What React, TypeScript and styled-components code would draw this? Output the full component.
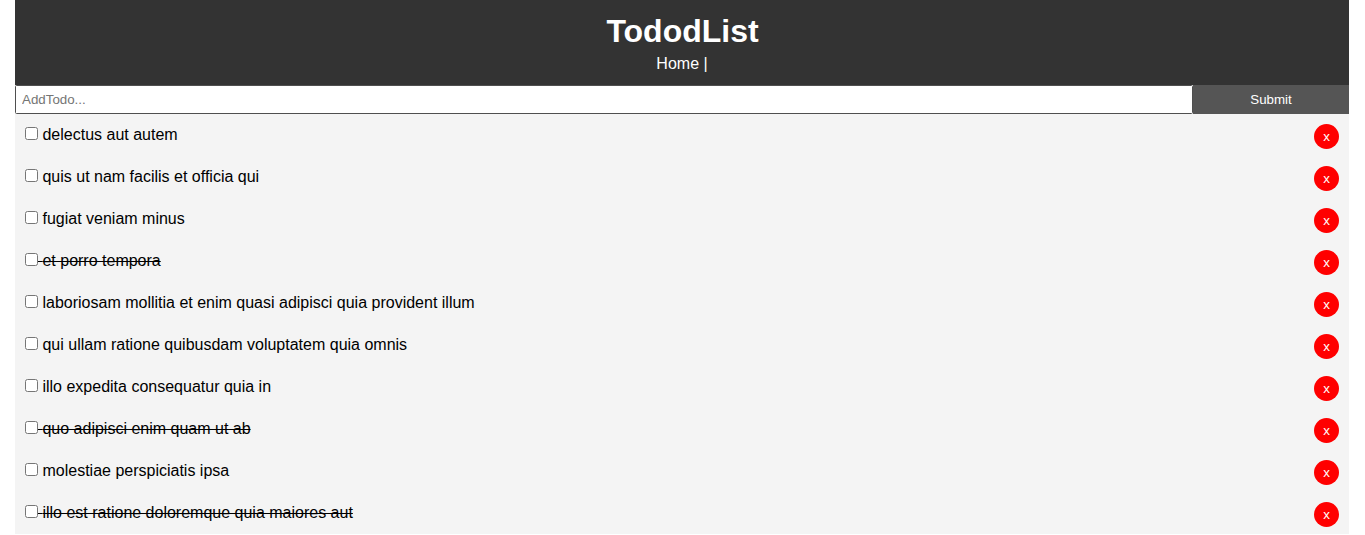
import React, { useState } from "react";
import styled, { createGlobalStyle } from "styled-components";

const GlobalStyle = createGlobalStyle`
  * { box-sizing: border-box; margin: 0; padding: 0; }
  body { font-family: "Liberation Sans", Arial, Helvetica, sans-serif; line-height: 1.4; background: #fff; }
`;
const Container = styled.div`
  padding: 0 16px 0 15px;
`;
const Header = styled.header`
  background: #333;
  color: #fff;
  text-align: center;
  padding: 9px 10px;
  height: 85px;
`;
const Title = styled.h1`
  font-size: 32px;
  line-height: 44px;
  padding-left: 1px;
`;
const NavLink = styled.a`
  color: #fff;
  text-decoration: none;
`;
const Form = styled.form`
  display: flex;
  background: #fff;
`;
const TextField = styled.input`
  flex: 1;
  padding: 5px 6px;
  height: 29px;
  min-width: 0;
  border: 1px solid #4f4f4f;
  border-radius: 1.5px;
  background: #fff;
  font-family: inherit;
  font-size: 13.333px;
`;
const Submit = styled.button`
  width: 156px;
  border: none;
  background: #555;
  color: #fff;
  font-family: inherit;
  font-size: 13.333px;
`;
const Item = styled.div<{ $done: boolean }>`
  background: #f4f4f4;
  padding: 10px;
  height: 42px;
  text-decoration: ${(p) => (p.$done ? "line-through" : "none")};
`;
const Remove = styled.button`
  float: right;
  width: 25px;
  height: 25px;
  border: none;
  border-radius: 50%;
  background: #ff0000;
  color: #fff;
  font-family: inherit;
  font-size: 13.333px;
`;

const initial = [
  { id: 1, title: "delectus aut autem", done: false },
  { id: 2, title: "quis ut nam facilis et officia qui", done: false },
  { id: 3, title: "fugiat veniam minus", done: false },
  { id: 4, title: "et porro tempora", done: true },
  { id: 5, title: "laboriosam mollitia et enim quasi adipisci quia provident illum", done: false },
  { id: 6, title: "qui ullam ratione quibusdam voluptatem quia omnis", done: false },
  { id: 7, title: "illo expedita consequatur quia in", done: false },
  { id: 8, title: "quo adipisci enim quam ut ab", done: true },
  { id: 9, title: "molestiae perspiciatis ipsa", done: false },
  { id: 10, title: "illo est ratione doloremque quia maiores aut", done: true },
];

export default function App() {
  const [todos, setTodos] = useState(initial);
  const toggle = (id: number) =>
    setTodos(todos.map((t) => (t.id === id ? { ...t, done: !t.done } : t)));
  return (
    <>
      <GlobalStyle />
      <Container>
        <Header>
          <Title>TododList</Title>
          <NavLink href="#">Home</NavLink> |
        </Header>
        <Form onSubmit={(e) => e.preventDefault()}>
          <TextField type="text" placeholder="AddTodo..." />
          <Submit type="submit">Submit</Submit>
        </Form>
        {todos.map((t) => (
          <Item key={t.id} $done={t.done}>
            <p>
              <input type="checkbox" onChange={() => toggle(t.id)} /> {t.title}
              <Remove onClick={() => setTodos(todos.filter((o) => o.id !== t.id))}>x</Remove>
            </p>
          </Item>
        ))}
      </Container>
    </>
  );
}
